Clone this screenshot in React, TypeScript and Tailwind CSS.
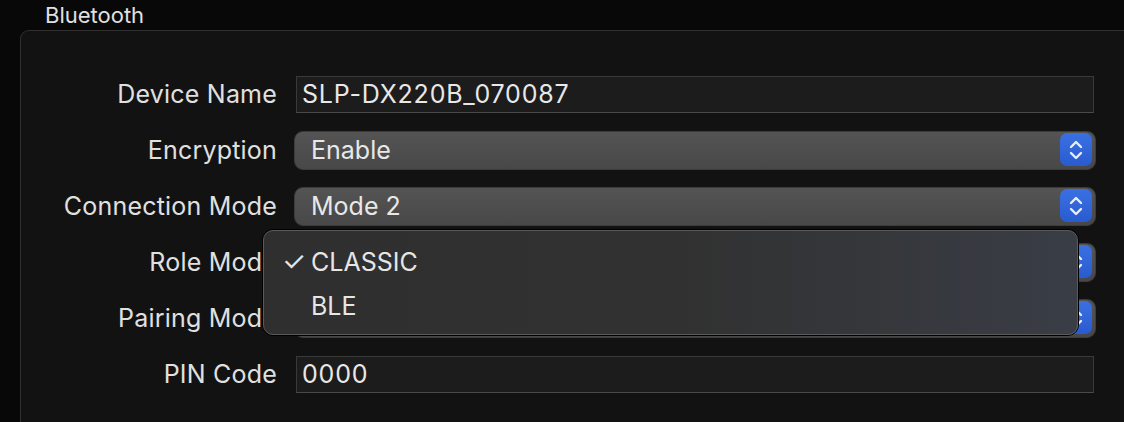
import React from "react";

const font = { fontFamily: "Inter, 'Liberation Sans', sans-serif" };

function Stepper() {
  return (
    <div className="flex h-[33px] w-[32px] items-center justify-center rounded-[7px] bg-gradient-to-b from-[#3a70e2] to-[#2a5bd0]">
      <svg width="14" height="24" viewBox="0 0 14 24" fill="none">
        <path d="M2 9 L7 4 L12 9" stroke="#e6edff" strokeWidth="2.4" strokeLinecap="round" strokeLinejoin="round" />
        <path d="M2 15 L7 20 L12 15" stroke="#e6edff" strokeWidth="2.4" strokeLinecap="round" strokeLinejoin="round" />
      </svg>
    </div>
  );
}

function PopupButton({ value }: { value: string }) {
  return (
    <div className="flex h-[39px] w-[802px] items-center justify-between rounded-[9px] border border-[#3c3c3c] bg-gradient-to-b from-[#545454] to-[#484848] pl-[16px] pr-[3px] pb-[1px]">
      <span className="text-[25px] leading-[30px] text-[#e8e8e8]">{value}</span>
      <Stepper />
    </div>
  );
}

function TextField({ value }: { value: string }) {
  return (
    <div className="ml-[2px] flex h-[37px] w-[798px] items-center border border-[#3a3a3a] border-b-[#4a4a4a] bg-[#1c1c1c] pl-[5px]">
      <span className="text-[25px] leading-[30px] tracking-[0.8px] text-[#e8e8e8]">{value}</span>
    </div>
  );
}

function Row({ label, children }: { label: string; children: React.ReactNode }) {
  return (
    <div className="flex h-[56px] items-center gap-[17px]">
      <div className="w-[256px] whitespace-nowrap text-right text-[25px] leading-[30px] tracking-[0.2px] text-[#e0e0e0]">{label}</div>
      {children}
    </div>
  );
}

export default function App() {
  return (
    <div className="h-[422px] w-[1124px] overflow-hidden bg-[#080808]" style={font}>
      <div className="pl-[45px] pt-[3px] text-[22px] leading-[24px] text-[#e0e0e0]">Bluetooth</div>
      <div className="relative ml-[20px] mt-[3px] h-[420px] w-[1120px] rounded-tl-[9px] border-l border-t border-[#2f2f2f] bg-[#121212] pt-[35px]">
        <Row label="Device Name">
          <TextField value="SLP-DX220B_070087" />
        </Row>
        <Row label="Encryption">
          <PopupButton value="Enable" />
        </Row>
        <Row label="Connection Mode">
          <PopupButton value="Mode 2" />
        </Row>
        <Row label="Role Mode">
          <PopupButton value="CLASSIC" />
        </Row>
        <Row label="Pairing Mode">
          <PopupButton value="Enable" />
        </Row>
        <Row label="PIN Code">
          <TextField value="0000" />
        </Row>

        <div className="absolute left-[241px] top-[198px] h-[107px] w-[817px] rounded-[11px] border border-black">
          <div className="h-full w-full rounded-[10px] border border-[#5a5a5a] bg-gradient-to-r from-[#2f2f2f] via-[#313131] to-[#393d45] pt-[9px]">
            <div className="flex h-[44px] items-center">
              <span className="w-[47px] pl-[18px] text-[27px] leading-[30px] text-[#e6e6e6]">✓</span>
              <span className="text-[25px] leading-[30px] text-[#e6e6e6]">CLASSIC</span>
            </div>
            <div className="flex h-[44px] items-center">
              <span className="w-[47px]" />
              <span className="text-[25px] leading-[30px] text-[#e6e6e6]">BLE</span>
            </div>
          </div>
        </div>
      </div>
    </div>
  );
}
